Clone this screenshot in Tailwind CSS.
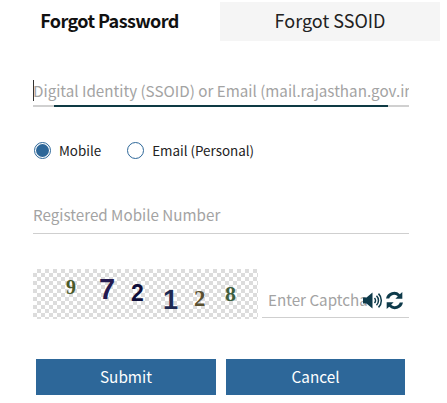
<!DOCTYPE html>
<html><head><meta charset="utf-8"><script src="https://cdn.jsdelivr.net/npm/@tailwindcss/browser@4"></script></head>
<body class="bg-white">
<div class="w-[447px] h-[403px] overflow-hidden font-['Noto_Sans_CJK_SC',sans-serif]">
  <div class="flex w-[440px] h-[39px] mt-[2px]">
    <div class="w-[220px] flex items-center justify-center text-[18px] font-bold text-[#111] tracking-[-0.6px] pb-[3px] pr-px">Forgot Password</div>
    <div class="w-[220px] flex items-center justify-center text-[18px] text-[#222] bg-[#f5f5f5] pb-[3px]">Forgot SSOID</div>
  </div>
  <div class="ml-[33px] w-[376px] mt-[37px] h-[29px] relative border-b-2 border-[#d0d0d0]">
    <div class="absolute left-0 top-[2px] w-px h-[21px] bg-[#333]"></div>
    <div class="absolute left-[21px] right-[21px] bottom-[-2px] h-[2px] bg-[#0e3a44]"></div>
    <div class="overflow-hidden whitespace-nowrap text-[15.2px] leading-[25px] text-[#a3a3a3]">Digital Identity (SSOID) or Email (mail.rajasthan.gov.in)</div>
  </div>
  <div class="flex items-center ml-[34px] mt-[33px] h-[20px] text-[13.4px] text-[#222]">
    <span class="w-[17px] h-[17px] rounded-full border border-[#2d6799] flex items-center justify-center"><span class="w-[13px] h-[13px] rounded-full bg-[#2d6799]"></span></span>
    <span class="ml-[8px]">Mobile</span>
    <span class="ml-[26px] w-[17px] h-[17px] rounded-full border border-[#2d6799]"></span>
    <span class="ml-[8px]">Email (Personal)</span>
  </div>
  <div class="ml-[33px] w-[376px] mt-[41px] h-[33px] border-b border-[#cfcfcf] text-[15.2px] leading-[26px] text-[#a3a3a3]">Registered Mobile Number</div>
  <div class="flex ml-[33px] mt-[35px] h-[50px]">
    <div class="relative w-[225px] h-[50px] bg-[repeating-conic-gradient(#dcdcdc_0_25%,#ffffff_0_50%)] bg-[length:8px_8px] font-['Liberation_Serif',serif] font-bold">
      <span class="absolute left-[33px] top-[3px] text-[20px] text-[#4a5a2a]">9</span>
      <span class="absolute left-[66px] top-[-1px] text-[29px] text-[#241a50] font-['Liberation_Sans',sans-serif]">7</span>
      <span class="absolute left-[98px] top-[7px] text-[23px] text-[#0e0e3a] font-['Liberation_Sans',sans-serif]">2</span>
      <span class="absolute left-[130px] top-[11px] text-[27px] text-[#1e2a52] font-['Liberation_Sans',sans-serif]">1</span>
      <span class="absolute left-[161px] top-[13px] text-[23px] text-[#5a5030]">2</span>
      <span class="absolute left-[192px] top-[8px] text-[22px] text-[#3f5f3f]">8</span>
    </div>
    <div class="relative ml-[4px] w-[147px] h-[49px] border-b border-[#cfcfcf]">
      <div class="w-[112px] pl-[6px] overflow-hidden whitespace-nowrap text-[15.2px] leading-[26px] mt-[17px] text-[#a3a3a3]">Enter Captcha</div>
      <svg class="absolute left-[101px] top-[23px] bg-transparent" width="20" height="17" viewBox="0 0 20 17" fill="none"><path d="M0 5.5h3.5L9.5 .5v16l-6-5H0z" fill="#0e3a4a"/><path d="M11.5 6a3.5 3.5 0 0 1 0 5M13.5 3.8a6.6 6.6 0 0 1 0 9.4M15.5 1.6a9.8 9.8 0 0 1 0 13.8" stroke="#0e3a4a" stroke-width="1.5"/></svg>
      <svg class="absolute left-[123px] top-[22px]" width="19" height="19" viewBox="0 0 17 17" fill="#0e3a4a"><path d="M15.5.8v6.2H9.3l2.2-2.2A4.6 4.6 0 0 0 3.8 6.6H.9A7.4 7.4 0 0 1 13.3 2.8z"/><path d="M1.5 16.2V10h6.2l-2.2 2.2a4.6 4.6 0 0 0 7.7-1.8h2.9A7.4 7.4 0 0 1 3.7 14.2z"/></svg>
    </div>
  </div>
  <div class="flex ml-[36px] mt-[40px] gap-[10px] text-white text-[15.3px]">
    <div class="w-[180px] h-[36px] pb-[2px] bg-[#2d6799] flex items-center justify-center">Submit</div>
    <div class="w-[179px] h-[36px] pb-[2px] bg-[#2d6799] flex items-center justify-center">Cancel</div>
  </div>
</div>
</body></html>
